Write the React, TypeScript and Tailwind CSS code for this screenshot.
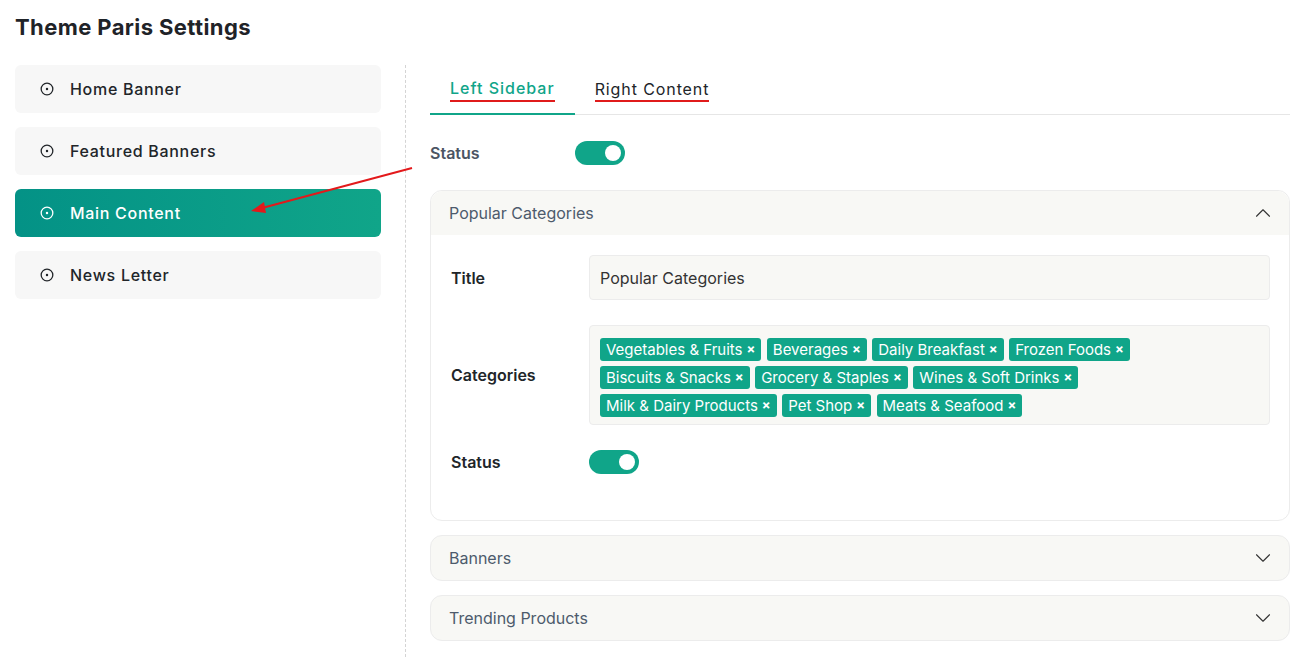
import { ChevronDown, ChevronUp, CircleDot } from "lucide-react";

const navItems = ["Home Banner", "Featured Banners", "Main Content", "News Letter"];

const categories = [
  "Vegetables & Fruits",
  "Beverages",
  "Daily Breakfast",
  "Frozen Foods",
  "Biscuits & Snacks",
  "Grocery & Staples",
  "Wines & Soft Drinks",
  "Milk & Dairy Products",
  "Pet Shop",
  "Meats & Seafood",
];

const Toggle = () => (
  <div className="flex h-[24px] w-[50px] items-center justify-end rounded-full bg-[#10a589] pr-[4px]">
    <div className="h-[16px] w-[16px] rounded-full bg-white" />
  </div>
);

const CollapsedPanel = ({ title }: { title: string }) => (
  <div className="flex h-[46px] items-center justify-between rounded-xl border border-[#ececec] bg-[#f8f8f5] pl-[18px] pr-[13px]">
    <span className="text-[16px] text-[#4d5b6c]">{title}</span>
    <ChevronDown size={26} strokeWidth={1} className="text-[#333]" />
  </div>
);

export default function App() {
  return (
    <div className="relative min-h-[657px] bg-white font-['Inter','Liberation_Sans',sans-serif] text-[#212529]">
      <h1 className="pl-[15px] pt-[13px] text-[22px] font-bold leading-[28px] tracking-[0.4px] text-[#1f2328]">
        Theme Paris Settings
      </h1>

      <div className="mt-[24px] flex">
        <div className="ml-[15px] flex w-[366px] flex-col gap-[14px]">
          {navItems.map((item) => {
            const active = item === "Main Content";
            return (
              <div
                key={item}
                className={`flex h-[48px] items-center gap-[16px] rounded-md pl-[25px] text-[16px] font-medium tracking-[0.7px] ${
                  active ? "bg-gradient-to-r from-[#049286] to-[#10a589] text-white" : "bg-[#f7f7f7] text-[#212529]"
                }`}
              >
                <CircleDot size={14} strokeWidth={2.2} />
                <span>{item}</span>
              </div>
            );
          })}
        </div>

        <div className="ml-[24px] min-h-[592px] border-l border-dashed border-[#d4d4d4]" />

        <div className="ml-[24px] w-[860px]">
          <div className="flex border-b border-[#e6e6e6]">
            <div className="relative -mb-px border-b-2 border-[#10a589] pb-[14px] pl-[20px] pr-[20px] pt-[12px] text-[16px] font-medium leading-[22px] tracking-[1px] text-[#10a589]">
              <span className="relative">
                Left Sidebar
                <span className="absolute left-0 right-0 top-full mt-[2px] h-[2px] bg-[#e01b1b]" />
              </span>
            </div>
            <div className="relative pb-[14px] pl-[20px] pr-[20px] pt-[13px] text-[16px] leading-[22px] tracking-[0.9px] text-[#212529]">
              <span className="relative">
                Right Content
                <span className="absolute left-0 right-0 top-full mt-[1px] h-[2px] bg-[#e01b1b]" />
              </span>
            </div>
          </div>

          <div className="mt-[26px] flex items-center">
            <span className="w-[145px] text-[16px] font-semibold text-[#4b5563]">Status</span>
            <Toggle />
          </div>

          <div className="mt-[25px] rounded-xl border border-[#ececec]">
            <div className="flex h-[44px] items-center justify-between rounded-t-xl bg-[#f8f8f5] pl-[18px] pr-[13px]">
              <span className="text-[16px] text-[#4d5b6c]">Popular Categories</span>
              <ChevronUp size={26} strokeWidth={1} className="text-[#333]" />
            </div>
            <div className="flex flex-col gap-[25px] pb-[46px] pl-[20px] pr-[19px] pt-[20px]">
              <div className="flex items-center">
                <span className="w-[138px] text-[16px] font-semibold text-[#212529]">Title</span>
                <div className="flex h-[45px] flex-1 items-center rounded border border-[#ececec] bg-[#f8f8f5] px-[10px] text-[16px] text-[#333]">
                  Popular Categories
                </div>
              </div>
              <div className="flex items-center">
                <span className="w-[138px] text-[16px] font-semibold text-[#212529]">Categories</span>
                <div className="flex flex-1 flex-wrap gap-[5.5px] rounded border border-[#ececec] bg-[#f8f8f5] pb-[7px] pl-[10px] pr-[30px] pt-[12px]">
                  {categories.map((c) => (
                    <span
                      key={c}
                      className="flex h-[22.5px] items-center gap-[4px] rounded-[3px] bg-[#10a589] px-[6px] text-[15px] leading-none text-white"
                    >
                      {c}
                      <span className="text-[13px] font-bold">×</span>
                    </span>
                  ))}
                </div>
              </div>
              <div className="flex items-center">
                <span className="w-[138px] text-[16px] font-semibold text-[#212529]">Status</span>
                <Toggle />
              </div>
            </div>
          </div>

          <div className="mt-[14px] flex flex-col gap-[14px]">
            <CollapsedPanel title="Banners" />
            <CollapsedPanel title="Trending Products" />
          </div>
        </div>
      </div>

      <svg className="pointer-events-none absolute left-0 top-0" width="1307" height="657">
        <line x1="412" y1="168" x2="262" y2="208" stroke="#e3191b" strokeWidth="2" />
        <polygon points="251,211 264,202 266,213" fill="#e3191b" />
      </svg>
    </div>
  );
}
